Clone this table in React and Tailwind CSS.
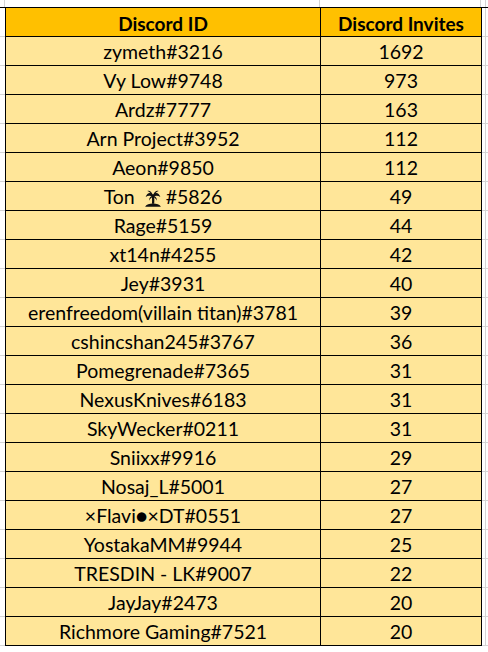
import React from "react";

const rows = [
  ["zymeth#3216", "1692"],
  ["Vy Low#9748", "973"],
  ["Ardz#7777", "163"],
  ["Arn Project#3952", "112"],
  ["Aeon#9850", "112"],
  ["island", "49"],
  ["Rage#5159", "44"],
  ["xt14n#4255", "42"],
  ["Jey#3931", "40"],
  ["erenfreedom(villain titan)#3781", "39"],
  ["cshincshan245#3767", "36"],
  ["Pomegrenade#7365", "31"],
  ["NexusKnives#6183", "31"],
  ["SkyWecker#0211", "31"],
  ["Sniixx#9916", "29"],
  ["Nosaj_L#5001", "27"],
  ["\u00d7Flavi\u25cf\u00d7DT#0551", "27"],
  ["YostakaMM#9944", "25"],
  ["TRESDIN - LK#9007", "22"],
  ["JayJay#2473", "20"],
  ["Richmore Gaming#7521", "20"],
];

// little desert-island glyph, the font has no emoji
const Island = () => (
  <svg viewBox="0 0 24 24" className="inline-block w-[20px] h-[18px] ml-[8px] mr-[3px] -mt-[3px] align-middle" fill="#111">
    <path d="M1.5 23.5 C4 18 20 18 22.5 23.5 Z" />
    <path d="M10.6 19.5 C11 15 10.8 11.5 10.2 8.5 L13 8.3 C13.8 11.5 14 15 13.6 19.5 Z" />
    <path d="M12 7.5 C8.5 3.8 4.2 4.6 2.2 10.5 C5.5 8.4 8.5 8.8 12 10 Z" />
    <path d="M12 7.5 C15.5 3.8 19.8 4.6 21.8 10.5 C18.5 8.4 15.5 8.8 12 10 Z" />
    <path d="M12 8.5 C10.5 3.5 7.5 1.5 4.5 2.5 C7.5 3.5 10 6 11 10 Z" />
    <path d="M12 8.5 C13.5 3.5 16.5 1.5 19.5 2.5 C16.5 3.5 14 6 13 10 Z" />
    <path d="M11.8 8.8 C8.8 9.6 6.8 12.2 6.6 15.5 C8.2 12.6 10 11 12.6 10.2 Z" />
    <path d="M12.2 8.8 C15.2 9.6 17.2 12.2 17.4 15.5 C15.8 12.6 14 11 11.4 10.2 Z" />
  </svg>
);

const Cell = ({ children, bold, w }) => (
  <div className={`${w} h-full border-r border-black flex items-center justify-center pt-[2px] whitespace-nowrap ${bold ? "font-bold text-[19px]" : ""}`}>
    {children}
  </div>
);

const Row = ({ children, bg }) => (
  <div className="flex h-[29px]">
    <div className="w-[5px] border-b border-[#d4d4d4]" />
    <div className={`flex border-l border-b border-black ${bg}`}>{children}</div>
    <div className="w-[4px] border-r border-b border-[#d4d4d4]" />
    <div className="flex-1 border-b border-[#d4d4d4]" />
  </div>
);

export default function App() {
  return (
    <div className="w-[488px] h-[652px] bg-white overflow-hidden text-black text-[19.5px] leading-none" style={{ fontFamily: "Lato, 'Open Sans', sans-serif" }}>
      {/* strip above the table, only the sheet gridlines */}
      <div className="flex h-[8px] border-b border-black">
        <div className="w-[5px] border-r border-[#d4d4d4]" />
        <div className="w-[315px] border-r border-[#d4d4d4]" />
        <div className="w-[161px] border-r border-[#d4d4d4]" />
        <div className="w-[5px] border-r border-[#d4d4d4]" />
      </div>

      <Row bg="bg-[#ffc000]">
        <Cell w="w-[315px]" bold>Discord ID</Cell>
        <Cell w="w-[161px]" bold>Discord Invites</Cell>
      </Row>

      {rows.map(([id, n], i) => (
        <Row key={i} bg="bg-[#ffe699]">
          <Cell w="w-[315px]">
            {id === "island" ? (
              <span>Ton<Island />#5826</span>
            ) : (
              id
            )}
          </Cell>
          <Cell w="w-[161px]">{n}</Cell>
        </Row>
      ))}
    </div>
  );
}
